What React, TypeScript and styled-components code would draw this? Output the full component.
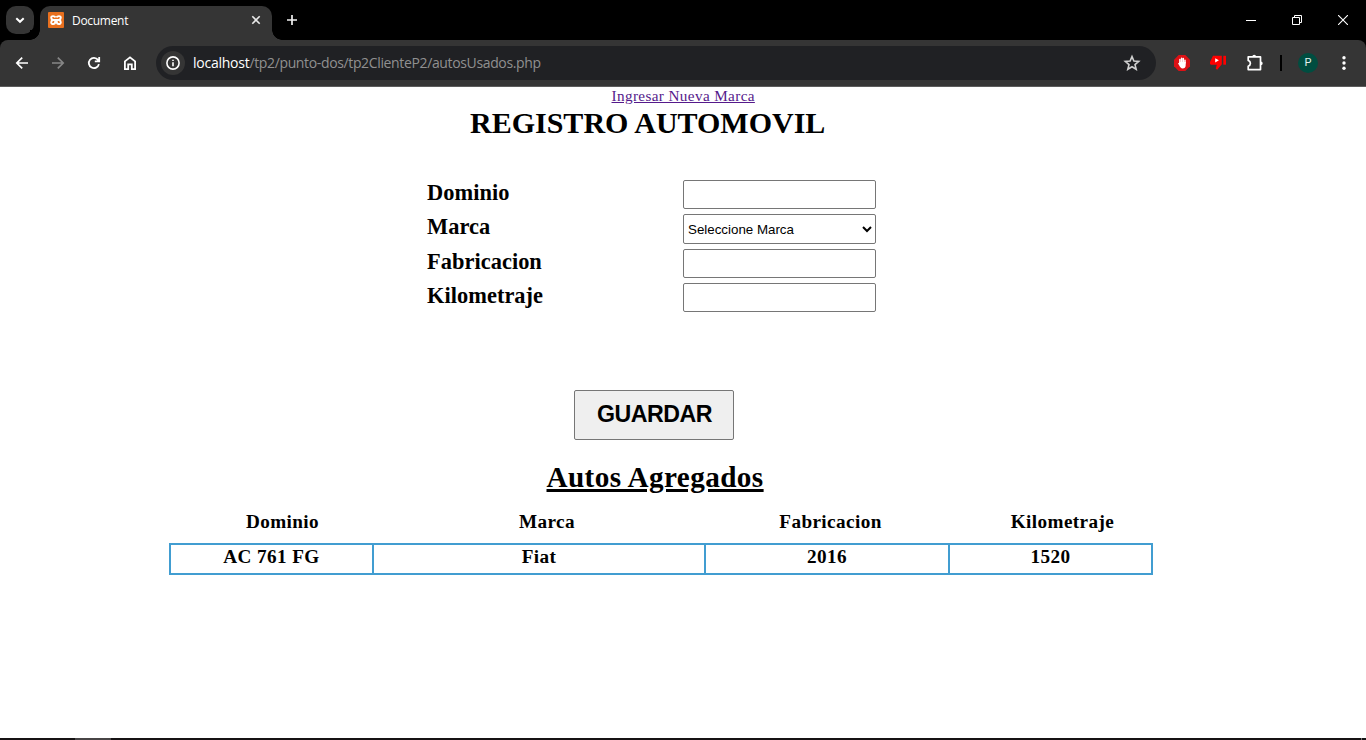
import React from 'react';
import styled, { createGlobalStyle } from 'styled-components';

const GlobalStyle = createGlobalStyle`
  * { box-sizing: border-box; }
  body { margin: 0; background: #fff; overflow: hidden; }
`;

const chromeFont = '"Open Sans", "Noto Sans", sans-serif';
const surface = '#353535';

const Screen = styled.div`
  display: flex;
  flex-direction: column;
  width: 1366px;
  height: 740px;
  background: #fff;
  color: #000;
  font-family: 'Liberation Serif', 'Times New Roman', serif;
`;

/* Tab strip */
const TabStrip = styled.header`
  display: flex;
  height: 40px;
  background: #000;
  color: #fff;
  padding: 6px 0 0 6px;
`;

const TabSearch = styled.div`
  width: 28px;
  height: 28px;
  margin-right: 6px;
  border-radius: 10px;
  background: ${surface};
`;

const Tab = styled.div`
  position: relative;
  display: flex;
  align-items: center;
  width: 232px;
  height: 34px;
  padding: 0 8px 6px;
  border-radius: 10px 10px 0 0;
  background: ${surface};

  &::before,
  &::after {
    content: '';
    position: absolute;
    bottom: 0;
    width: 10px;
    height: 10px;
  }
  &::before {
    left: -10px;
    background: radial-gradient(circle at 0 0, #000 9.5px, ${surface} 10px);
  }
  &::after {
    right: -10px;
    background: radial-gradient(circle at 100% 0, #000 9.5px, ${surface} 10px);
  }
`;

const TabTitle = styled.span`
  flex: 1;
  margin-left: 8px;
  font: 12px/18px ${chromeFont};
  letter-spacing: -0.3px;
  padding-top: 1px;
`;

const NewTab = styled.div`
  width: 28px;
  height: 28px;
  margin-left: 6px;
`;

const WindowControls = styled.div`
  display: flex;
  margin: -6px 0 0 auto;
`;

const WindowButton = styled.div`
  width: 46px;
  height: 40px;
  display: flex;
  align-items: center;
  justify-content: center;
`;

/* Toolbar */
const ToolbarBack = styled.div`
  background: #000;
  height: 47px;
`;

const Toolbar = styled.nav`
  display: flex;
  align-items: center;
  height: 47px;
  border-radius: 8px 8px 0 0;
  border-bottom: 1px solid #5c5c5c;
  background: ${surface};
  padding: 0 4px;
`;

const ToolButton = styled.div<{ $width?: number }>`
  display: flex;
  flex-shrink: 0;
  align-items: center;
  justify-content: center;
  width: ${(p) => p.$width ?? 36}px;
  height: 34px;
`;

const AddressBar = styled.div`
  display: flex;
  flex-shrink: 0;
  align-items: center;
  width: 1000px;
  height: 34px;
  margin: 0 8px 0 8px;
  padding: 0 14px 0 5px;
  border-radius: 17px;
  background: #202124;
`;

const SiteInfo = styled.div`
  display: flex;
  align-items: center;
  justify-content: center;
  width: 24px;
  height: 24px;
  border-radius: 50%;
  background: ${surface};
`;

const Url = styled.span`
  flex: 1;
  margin-left: 8px;
  font: 14px/20px ${chromeFont};
  letter-spacing: -0.36px;
  color: #909090;
`;

const Host = styled.span`
  color: #fff;
  letter-spacing: -0.25px;
`;

const Divider = styled.div`
  flex-shrink: 0;
  width: 2px;
  height: 16px;
  margin: 0 6px;
  background: #000;
`;

const Avatar = styled.div`
  width: 20px;
  height: 20px;
  border-radius: 50%;
  background: #004d40;
  color: #e6f2ef;
  font: 11px/20px Roboto, sans-serif;
  text-align: center;
`;

/* Web page */
const Page = styled.main`
  display: flex;
  flex-direction: column;
  align-items: flex-start;
  flex: 1;
`;

const BrandLink = styled.a`
  margin-left: 611.5px;
  font-size: 15.2px;
  line-height: 18px;
  letter-spacing: 0.38px;
  color: #551a8b;
  text-decoration: underline;
`;

const Title = styled.h1`
  margin: 0 0 39px 470px;
  font-size: 30px;
  line-height: 36px;
  white-space: nowrap;
`;

const Form = styled.form`
  display: flex;
  flex-direction: column;
  gap: 5px;
  margin-left: 427px;
`;

const Field = styled.label`
  display: grid;
  grid-template-columns: 256px 193px;
  align-items: start;
`;

const FieldName = styled.span`
  font-size: 22.4px;
  font-weight: bold;
  line-height: 25px;
  letter-spacing: 0.04px;
`;

const Input = styled.input`
  height: 29px;
  margin: 0;
  padding: 1px 2px;
  border: 1px solid #767676;
  border-radius: 2px;
  background: #fff;
`;

const Select = styled.select`
  height: 30px;
  margin: 0;
  padding: 0 1px 0 0;
  border: 1px solid #767676;
  border-radius: 2px;
  background: #fff;
  color: #000;
  font: 13.333px 'Liberation Sans', Arial, sans-serif;
`;

const SaveButton = styled.button`
  width: 160px;
  height: 50px;
  margin: 73px 0 0 147px;
  padding: 0 0 2px 1px;
  border: 1px solid #767676;
  border-radius: 2px;
  background: #efefef;
  color: #000;
  font: bold 23.2px 'Liberation Sans', Arial, sans-serif;
  letter-spacing: -0.5px;
`;

const ListTitle = styled.h2`
  margin: 19px 0 15px 546.5px;
  font-size: 29.2px;
  line-height: 36px;
  letter-spacing: 0.4px;
  text-decoration: underline;
  text-decoration-thickness: 3px;
  white-space: nowrap;
`;

const HeaderRow = styled.div`
  display: grid;
  grid-template-columns: 225px 304px 263px 201px;
  margin: 0 0 9px 170px;
  font-size: 19.2px;
  font-weight: bold;
  line-height: 24px;
  letter-spacing: 0.4px;
  text-align: center;
`;

const DataRow = styled.div`
  display: grid;
  grid-template-columns: 203px 332px 244px 203px;
  height: 32px;
  margin-left: 169px;
  border: solid #419dd1;
  border-width: 2px 0 2px 2px;
  font-size: 19.2px;
  font-weight: bold;
  line-height: 24px;
  letter-spacing: 0.4px;
  text-align: center;
`;

const Cell = styled.div`
  border-right: 2px solid #419dd1;
`;

/* Top edge of the desktop taskbar */
const Taskbar = styled.footer`
  display: flex;
  height: 2px;
  background: #161314;
`;

const ActiveTask = styled.div`
  width: 36px;
  margin-left: 75px;
  background: #484546;
`;

const ShowDesktop = styled.div`
  width: 1px;
  margin: 0 4px 0 auto;
  background: #777;
`;

const fields = ['Dominio', 'Marca', 'Fabricacion', 'Kilometraje'];
const cars = [['AC 761 FG', 'Fiat', '2016', '1520']];

function Favicon() {
  return (
    <svg width="16" height="16" viewBox="0 0 16 16">
      <rect width="16" height="16" rx="1" fill="#e8701f" />
      <path
        d="M7.6 5.4C6.6 3.9 3.2 3.4 3.2 5.7C3.2 6.9 4 7.6 5.1 8C4 8.4 3.2 9.1 3.2 10.3C3.2 12.8 7.2 12.6 7.2 10V8H8.8V10C8.8 12.6 12.8 12.8 12.8 10.3C12.8 9.1 12 8.4 10.9 8C12 7.6 12.8 6.9 12.8 5.7C12.8 3.4 9.4 3.9 8.4 5.4M5.4 8H10.6"
        fill="none" stroke="#fff" strokeWidth="1.9" strokeLinejoin="round"
      />
    </svg>
  );
}

export default function App() {
  return (
    <>
      <GlobalStyle />
      <Screen>
        <TabStrip>
          <TabSearch>
            <svg width="28" height="28" fill="none" stroke="#fff" strokeWidth="2">
              <path d="M10.3 12.2L14 15.8L17.7 12.2" />
            </svg>
          </TabSearch>
          <Tab>
            <Favicon />
            <TabTitle>Document</TabTitle>
            <svg width="16" height="16" fill="none" stroke="#e8e8e8" strokeWidth="1.6">
              <path d="M4.3 4.3L11.7 11.7M11.7 4.3L4.3 11.7" />
            </svg>
          </Tab>
          <NewTab>
            <svg width="28" height="28" fill="none" stroke="#f0f0f0" strokeWidth="1.7">
              <path d="M14 9V19M9 14H19" />
            </svg>
          </NewTab>
          <WindowControls>
            <WindowButton>
              <svg width="10" height="10" stroke="#fff"><path d="M0 5.5H10" /></svg>
            </WindowButton>
            <WindowButton>
              <svg width="10" height="10" fill="none" stroke="#fff">
                <path d="M.5 2.5H7.5V9.5H.5ZM2.5 2.5V.5H9.5V7.5H7.5" />
              </svg>
            </WindowButton>
            <WindowButton>
              <svg width="10" height="10" fill="none" stroke="#fff" strokeWidth="1.1">
                <path d="M0 0L10 10M10 0L0 10" />
              </svg>
            </WindowButton>
          </WindowControls>
        </TabStrip>

        <ToolbarBack>
          <Toolbar>
            <ToolButton>
              <svg width="16" height="16" fill="none" stroke="#fff" strokeWidth="1.7">
                <path d="M14 8H3M8.2 2.6L2.8 8L8.2 13.4" />
              </svg>
            </ToolButton>
            <ToolButton>
              <svg width="16" height="16" fill="none" stroke="#868686" strokeWidth="1.7">
                <path d="M2 8H13M7.8 2.6L13.2 8L7.8 13.4" />
              </svg>
            </ToolButton>
            <ToolButton>
              <svg width="16" height="16" fill="none" stroke="#fff" strokeWidth="1.8">
                <path d="M12.9 9.1A5.1 5.1 0 1 1 12 4.9L13.2 6.2M13.2 2V6.4H8.8" />
              </svg>
            </ToolButton>
            <ToolButton>
              <svg width="16" height="16" fill="none" stroke="#fff" strokeWidth="1.8">
                <path d="M2.9 6.4L8 2.4L13.1 6.4V14.1H9.8V9.3H6.2V14.1H2.9Z" />
              </svg>
            </ToolButton>
            <AddressBar>
              <SiteInfo>
                <svg width="16" height="16" fill="none" stroke="#fff" strokeWidth="1.6">
                  <circle cx="8" cy="8" r="6.1" />
                  <path d="M8 7.2V11.2M8 4.7V6.1" />
                </svg>
              </SiteInfo>
              <Url><Host>localhost</Host>/tp2/punto-dos/tp2ClienteP2/autosUsados.php</Url>
              <svg width="20" height="20" viewBox="0 0 20 20" fill="none" stroke="#d0d0d0" strokeWidth="1.6">
                <path d="M10 3.6L11.9 8L16.7 8.4L13 11.6L14.2 16.3L10 13.8L5.8 16.3L7 11.6L3.3 8.4L8.1 8Z" />
              </svg>
            </AddressBar>
            <ToolButton>
              <svg width="16" height="16">
                <path d="M4.7 0H11.3L16 4.7V11.3L11.3 16H4.7L0 11.3V4.7Z" fill="#dd1115" />
                <path
                  d="M5.9 8V4.4M7.6 8V3.2M9.3 8V3.5M11 8V5.2"
                  stroke="#fff" strokeWidth="1.5" strokeLinecap="round"
                />
                <path
                  d="M5.3 7H11.7V10.2C11.7 12.3 10.4 13.4 8.7 13.4C6.9 13.4 6.1 12.3 5.4 10.8L4.1 8.5C4.5 7.8 5 8 5.3 8.5Z"
                  fill="#fff"
                />
              </svg>
            </ToolButton>
            <ToolButton>
              <svg width="16" height="16" fill="#f00">
                <path d="M3 .8H11.8V9.2L7.2 14.8L5.8 13.7L6.8 9.8H.8L0 8.8V6.9Z" />
                <path d="M13.3 .8H16V9.7H13.3Z" />
                <path d="M5.2 3.2V7.4L8.9 5.3Z" fill="#fff" />
              </svg>
            </ToolButton>
            <ToolButton $width={38}>
              <svg width="18" height="18" viewBox="0 0 18 18" fill="none" stroke="#fff" strokeWidth="1.7">
                <path d="M2.2 2.9H14.5V15.6H2.2V12.2C3.8 11.6 4.4 10.5 4.4 9.3S3.8 7 2.2 6.4Z" strokeLinejoin="round" />
                <path d="M6.3 2.7A1.9 1.9 0 0 1 10.1 2.7ZM14.8 7.4A1.9 1.9 0 0 1 14.8 11.2Z" fill="#fff" stroke="none" />
              </svg>
            </ToolButton>
            <Divider />
            <ToolButton $width={40}><Avatar>P</Avatar></ToolButton>
            <ToolButton $width={32}>
              <svg width="4" height="16" fill="#fff">
                <circle cx="2" cy="2.7" r="1.7" />
                <circle cx="2" cy="8" r="1.7" />
                <circle cx="2" cy="13.3" r="1.7" />
              </svg>
            </ToolButton>
          </Toolbar>
        </ToolbarBack>

        <Page>
          <BrandLink href="#">Ingresar Nueva Marca</BrandLink>
          <Title>REGISTRO AUTOMOVIL</Title>
          <Form>
            {fields.map((name) => (
              <Field key={name}>
                <FieldName>{name}</FieldName>
                {name === 'Marca' ? (
                  <Select><option>Seleccione Marca</option></Select>
                ) : (
                  <Input type="text" />
                )}
              </Field>
            ))}
            <SaveButton type="button">GUARDAR</SaveButton>
          </Form>
          <ListTitle>Autos Agregados</ListTitle>
          <HeaderRow>
            {fields.map((name) => <span key={name}>{name}</span>)}
          </HeaderRow>
          {cars.map((car) => (
            <DataRow key={car[0]}>
              {car.map((value) => <Cell key={value}>{value}</Cell>)}
            </DataRow>
          ))}
        </Page>

        <Taskbar>
          <ActiveTask />
          <ShowDesktop />
        </Taskbar>
      </Screen>
    </>
  );
}
